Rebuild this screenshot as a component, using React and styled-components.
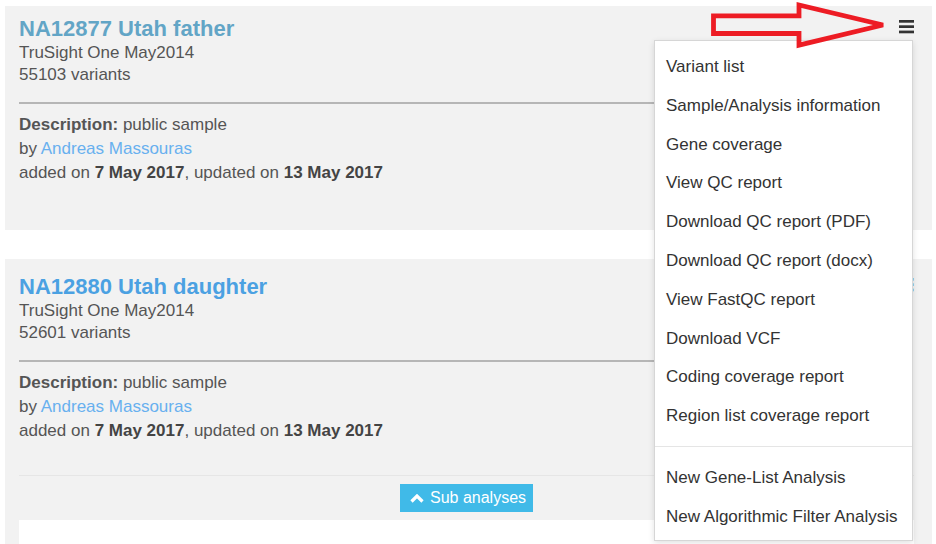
import React from "react";
import styled, { createGlobalStyle } from "styled-components";

const GlobalStyle = createGlobalStyle`
  html, body {
    margin: 0;
    padding: 0;
    background: #ffffff;
    font-family: "Liberation Sans", Arial, sans-serif;
    overflow: hidden;
  }
  * { box-sizing: border-box; }
`;

const Page = styled.div`
  position: relative;
  height: 544px;
  overflow: hidden;
  padding: 6px 4px 0 5px;
  display: flex;
  flex-direction: column;
  gap: 29px;
`;

const Card = styled.section`
  position: relative;
  z-index: ${(p) => p.$z || "auto"};
  background: #f2f2f2;
  padding: ${(p) => p.$top}px 18px ${(p) => p.$bottom}px 14px;
`;

const Header = styled.div`
  display: flex;
  justify-content: space-between;
  align-items: flex-start;
`;

const TitleBlock = styled.div`
  display: flex;
  flex-direction: column;
`;

const Title = styled.a`
  display: block;
  font-size: 22px;
  font-weight: bold;
  line-height: 26px;
  color: ${(p) => p.$color};
  text-decoration: none;
`;

const Meta = styled.div`
  font-size: 17px;
  line-height: 22px;
  color: #555555;
`;

const MenuToggle = styled.button`
  display: block;
  margin-top: 4px;
  padding: 0;
  border: 0;
  background: none;
  color: ${(p) => p.$color};
  cursor: pointer;
  line-height: 0;
`;

const Divider = styled.div`
  margin-top: 16px;
  margin-right: 6px;
  height: 2px;
  background: #b6b6b6;
`;

const Info = styled.div`
  margin-top: 9px;
  font-size: 17px;
  line-height: 24px;
  color: #555555;
`;

const Label = styled.b`
  font-weight: bold;
  color: #555555;
`;

const DateText = styled.b`
  font-weight: bold;
  color: #444444;
`;

const Link = styled.a`
  color: #68b0ef;
  text-decoration: none;
`;

const SubFooter = styled.div`
  margin-top: 32px;
  border-top: 1px solid #e6e6e6;
  padding-top: 8px;
  display: flex;
  flex-direction: column;
  align-items: center;
`;

const SubButton = styled.button`
  display: inline-flex;
  align-items: center;
  gap: 6px;
  height: 28px;
  padding: 0 7px 0 10px;
  border: 0;
  background: #40bae8;
  color: #ffffff;
  font-family: "Liberation Sans", Arial, sans-serif;
  font-size: 16px;
  cursor: pointer;
`;

const SubPanel = styled.div`
  align-self: stretch;
  margin-top: 8px;
  height: 60px;
  background: #ffffff;
`;

const Menu = styled.ul`
  position: absolute;
  top: 34px;
  right: 19px;
  z-index: 10;
  width: 259px;
  margin: 0;
  padding: 6px 0 4px;
  list-style: none;
  background: #ffffff;
  border: 1px solid #d6d6d6;
  box-shadow: 0 2px 6px rgba(0, 0, 0, 0.12);
`;

const MenuItem = styled.li`
  padding: 8px 11px 6px;
  font-size: 17px;
  line-height: 24.8px;
  color: #333333;
  white-space: nowrap;
  cursor: pointer;
`;

const MenuDivider = styled.li`
  height: 1px;
  margin: 11px 0 11px;
  background: #e5e5e5;
`;

const Annotation = styled.svg`
  position: absolute;
  left: 700px;
  top: 0;
  z-index: 20;
  pointer-events: none;
`;

const Hamburger = () => (
  <svg width="15" height="14" viewBox="0 0 15 14">
    <rect x="0" y="0" width="15" height="2.7" fill="currentColor" />
    <rect x="0" y="5.3" width="15" height="2.7" fill="currentColor" />
    <rect x="0" y="10.6" width="15" height="2.7" fill="currentColor" />
  </svg>
);

const ChevronUp = () => (
  <svg width="14" height="9" viewBox="0 0 14 9">
    <path d="M1.5 7.5 L7 2 L12.5 7.5" fill="none" stroke="#ffffff" strokeWidth="3.2" strokeLinejoin="miter" />
  </svg>
);

const menuTop = [
  "Variant list",
  "Sample/Analysis information",
  "Gene coverage",
  "View QC report",
  "Download QC report (PDF)",
  "Download QC report (docx)",
  "View FastQC report",
  "Download VCF",
  "Coding coverage report",
  "Region list coverage report",
];

const menuBottom = ["New Gene-List Analysis", "New Algorithmic Filter Analysis"];

const SampleInfo = () => (
  <Info>
    <div>
      <Label>Description:</Label> public sample
    </div>
    <div>
      by <Link href="#">Andreas Massouras</Link>
    </div>
    <div>
      added on <DateText>7 May 2017</DateText>, updated on <DateText>13 May 2017</DateText>
    </div>
  </Info>
);

export default function App() {
  return (
    <>
      <GlobalStyle />
      <Page>
        <Annotation width="200" height="52" viewBox="700 0 200 52">
          <path
            d="M713.5 15.8 L799 15.8 L799 5 L883 25 L799 45.2 L799 33.5 L713.5 33.5 Z"
            fill="none"
            stroke="#ed1c24"
            strokeWidth="4.8"
            strokeLinejoin="miter"
          />
        </Annotation>

        <Card $top={10} $bottom={45} $z={2}>
          <Header>
            <TitleBlock>
              <Title href="#" $color="#62a5c6">NA12877 Utah father</Title>
              <Meta>TruSight One May2014</Meta>
              <Meta>55103 variants</Meta>
            </TitleBlock>
            <MenuToggle $color="#333333" aria-label="menu">
              <Hamburger />
            </MenuToggle>
          </Header>
          <Divider />
          <SampleInfo />
          <Menu>
            {menuTop.map((t) => (
              <MenuItem key={t}>{t}</MenuItem>
            ))}
            <MenuDivider />
            {menuBottom.map((t) => (
              <MenuItem key={t}>{t}</MenuItem>
            ))}
          </Menu>
        </Card>

        <Card $top={15} $bottom={0}>
          <Header>
            <TitleBlock>
              <Title href="#" $color="#4ba1e2">NA12880 Utah daughter</Title>
              <Meta>TruSight One May2014</Meta>
              <Meta>52601 variants</Meta>
            </TitleBlock>
            <MenuToggle $color="#8fd0ec" aria-label="menu">
              <Hamburger />
            </MenuToggle>
          </Header>
          <Divider />
          <SampleInfo />
          <SubFooter>
            <SubButton>
              <ChevronUp />
              Sub analyses
            </SubButton>
            <SubPanel />
          </SubFooter>
        </Card>
      </Page>
    </>
  );
}
